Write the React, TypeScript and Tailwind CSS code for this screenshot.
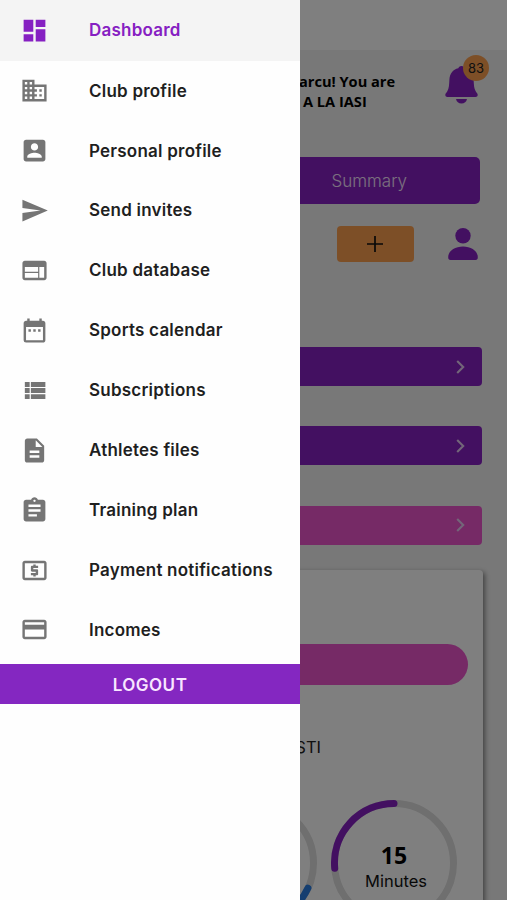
import React from "react";
import type { IconType } from "react-icons";
import {
  MdAssignment,
  MdDashboard,
  MdDateRange,
  MdDescription,
  MdDomain,
  MdLocalAtm,
  MdPayment,
  MdSend,
  MdWeb,
} from "react-icons/md";

function ViewListIcon({ size = 24 }: { size?: string | number }) {
  return (
    <svg width={size} height={size} viewBox="0 0 24 24" fill="currentColor">
      <path d="M4 14h4v-4H4v4zm0 5h4v-4H4v4zM4 9h4V5H4v4zm5 5h12v-4H9v4zm0 5h12v-4H9v4zM9 5v4h12V5H9z" />
    </svg>
  );
}

function AccountBoxIcon({ size = 24 }: { size?: string | number }) {
  return (
    <svg width={size} height={size} viewBox="0 0 24 24" fill="currentColor">
      <path d="M3 5v14c0 1.1.89 2 2 2h14c1.1 0 2-.9 2-2V5c0-1.1-.9-2-2-2H5c-1.11 0-2 .9-2 2zm12 4c0 1.66-1.34 3-3 3s-3-1.34-3-3 1.34-3 3-3 3 1.34 3 3zm-9 8c0-2 4-3.1 6-3.1s6 1.1 6 3.1v1H6v-1z" />
    </svg>
  );
}

const menu: { label: string; icon: IconType | typeof ViewListIcon; active?: boolean }[] = [
  { label: "Dashboard", icon: MdDashboard, active: true },
  { label: "Club profile", icon: MdDomain },
  { label: "Personal profile", icon: AccountBoxIcon },
  { label: "Send invites", icon: MdSend },
  { label: "Club database", icon: MdWeb },
  { label: "Sports calendar", icon: MdDateRange },
  { label: "Subscriptions", icon: ViewListIcon },
  { label: "Athletes files", icon: MdDescription },
  { label: "Training plan", icon: MdAssignment },
  { label: "Payment notifications", icon: MdLocalAtm },
  { label: "Incomes", icon: MdPayment },
];

const sections = ["bg-[#8620c2]", "bg-[#8620c2]", "bg-[#ec54cc]"];

function Ring({ color, from, to, children }: { color: string; from: number; to: number; children?: React.ReactNode }) {
  const r = 59.5;
  const point = (deg: number) => {
    const a = (deg * Math.PI) / 180;
    return `${63 + r * Math.cos(a)} ${63 + r * Math.sin(a)}`;
  };
  return (
    <div className="grid h-[126px] w-[126px] shrink-0 place-items-center">
      <svg viewBox="0 0 126 126" className="col-start-1 row-start-1 h-full w-full" fill="none" strokeWidth={7}>
        <circle cx={63} cy={63} r={r} stroke="#dedede" />
        <path d={`M${point(from)} A${r} ${r} 0 0 1 ${point(to)}`} stroke={color} strokeLinecap="round" />
      </svg>
      <div className="col-start-1 row-start-1 text-center">{children}</div>
    </div>
  );
}

function Drawer() {
  return (
    <aside className="absolute inset-y-0 left-0 w-[300px] bg-[#fefefe]">
      <nav>
        {menu.map(({ label, icon: Icon, active }) => (
          <div
            key={label}
            className={
              active
                ? "flex h-[61px] items-center bg-[#f4f4f4] pl-[19.5px] text-[#8620c2]"
                : "flex h-[59.9px] items-center pl-[19.5px] text-[#1f1f1f]"
            }
          >
            <span className={active ? "" : "text-[#757575]"}>
              <Icon size={29} />
            </span>
            <span className="ml-[40.5px] pt-px text-[17px] font-semibold tracking-[0.22px] whitespace-nowrap">{label}</span>
          </div>
        ))}
      </nav>
      <button className="mt-[4px] flex h-[40.5px] w-full items-center justify-center bg-[#8427c1] pt-[3px] text-[17px] font-semibold tracking-[0.5px] text-[#f8e6ff]">
        LOGOUT
      </button>
    </aside>
  );
}

export default function App() {
  return (
    <div className="relative h-[900px] w-full overflow-hidden bg-[#f0f0f0] font-['Inter','Liberation_Sans',sans-serif]">
      <header className="h-[50px] bg-white" />

      <main>
        <div className="flex h-[107px] items-start justify-end pt-[15px] pr-[29px]">
          <div className="mt-[6px] w-[146px] font-['Open_Sans','Noto_Sans',sans-serif] text-[14.6px] leading-5 font-bold whitespace-nowrap text-black">
            <p>arcu! You are</p>
            <p className="pl-[4px]">A LA IASI</p>
          </div>
          <div className="relative text-[#8620c2]">
            <svg viewBox="0 0 33 38" className="mt-[1px] h-[38px] w-[33px]" fill="currentColor">
              <path d="M16.5 0c-1.9 0-2.8 1.2-3.2 2.2C7.8 3.4 4.8 7.6 4.4 13.5c-.3 5.5-.4 9-2.1 11.7C1.2 27 .3 27.6.3 29c0 1.3.9 2 2.2 2h28c1.3 0 2.2-.7 2.2-2 0-1.4-.9-2-2-3.8-1.7-2.7-1.8-6.2-2.1-11.7-.4-5.9-3.4-10.1-8.9-11.3C19.3 1.2 18.4 0 16.5 0z" />
              <path d="M11 33h11c-.6 2.8-2.6 4.6-5.5 4.6S11.600 35.800 11 33z" />
            </svg>
            <span className="absolute -top-[10px] left-[18px] flex h-[26px] w-[26px] items-center justify-center rounded-full bg-[#fa9f4e] pt-px text-[13px] text-[#222]">
              83
            </span>
          </div>
        </div>

        <div className="ml-5 flex h-[47px] w-[460px] items-center justify-end rounded-[5px] bg-[#8620c2] pt-[2px] pr-[73px] text-[17px] font-light text-[#f6e0ff]">
          Summary
        </div>

        <div className="mt-[22px] flex h-9 items-center justify-end gap-[34px] pr-[29px]">
          <button className="flex h-9 w-[77px] items-center justify-center rounded-[4px] bg-[#fa9f4e] pr-[2px]">
            <svg viewBox="0 0 16 16" className="h-4 w-4" stroke="#111" strokeWidth={1.7}>
              <path d="M8 0v16M0 8h16" />
            </svg>
          </button>
          <svg viewBox="0 0 30 32" className="h-8 w-[30px] text-[#8620c2]" fill="currentColor">
            <circle cx={15} cy={7.8} r={7.7} />
            <path d="M15 18.4C7.2 18.4.2 22.6.2 29.2c0 1.800.7 2.800 2.300 2.800h25c1.600 0 2.300-1 2.300-2.800 0-6.600-7-10.800-14.800-10.800z" />
          </svg>
        </div>

        <div className="mt-[85px] ml-5 flex w-[462px] flex-col gap-[40.3px]">
          {sections.map((bg, i) => (
            <div key={i} className={`flex h-[39px] items-center justify-end rounded-[4px] pr-[17px] ${bg}`}>
              <svg viewBox="0 0 9 14" className="h-[14px] w-[9px]" fill="none" stroke="#e6cdf2" strokeWidth={2.1}>
                <path d="M1.2 1l6 6-6 6" />
              </svg>
            </div>
          ))}
        </div>

        <section className="mt-[25px] ml-5 h-[340px] w-[463px] rounded-[4px] bg-white pt-[74px] shadow-[2px_2px_5px_rgba(0,0,0,0.45)]">
          <div className="ml-[15px] h-[41px] w-[433px] rounded-full bg-[#ec54cc]" />
          <p className="mt-[50px] pr-[162px] text-right text-[16.5px] leading-6 text-[#222]">STI</p>
          <div className="mt-[41px] flex justify-end gap-[14px] pr-[26px]">
            <Ring color="#2a7de1" from={25} to={100} />
            <Ring color="#8620c2" from={175} to={270}>
              <p className="mt-[8px] font-['Open_Sans','Noto_Sans',sans-serif] text-[23px] leading-7 font-bold text-black">15</p>
              <p className="pl-1 text-[16.5px] leading-6 text-[#111]">Minutes</p>
            </Ring>
          </div>
        </section>
      </main>

      <div className="absolute inset-0 bg-black/50" />
      <Drawer />
    </div>
  );
}
